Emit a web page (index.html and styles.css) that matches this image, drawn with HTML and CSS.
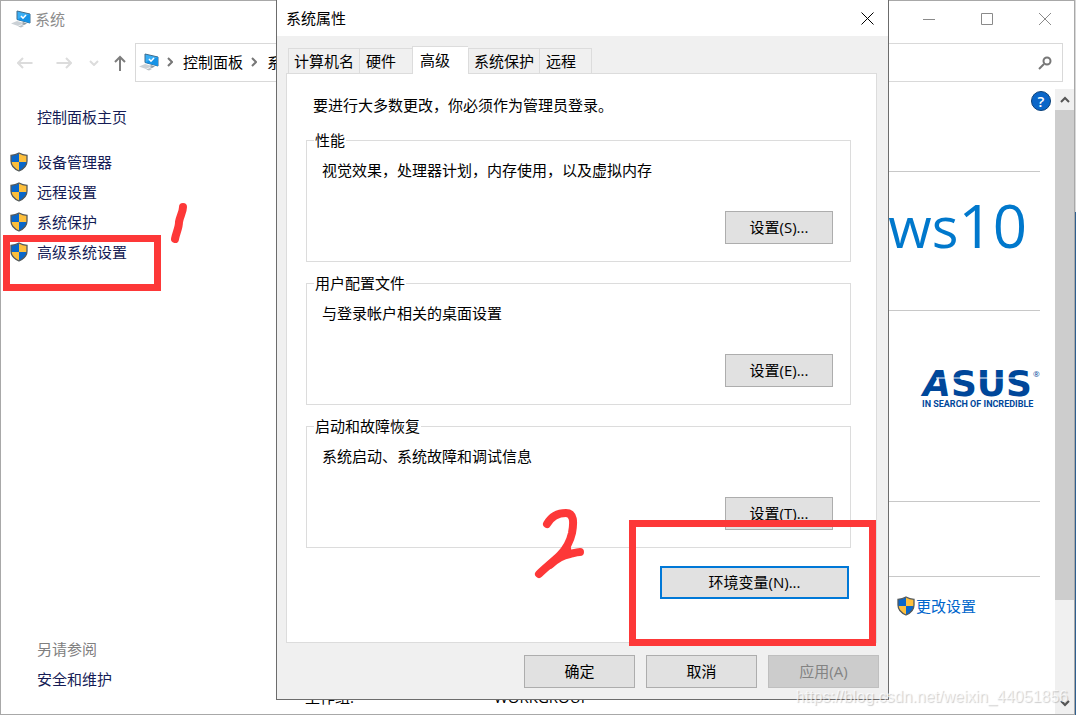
FILE: index.html
```
<!DOCTYPE html>
<html lang="zh-CN">
<head>
    <meta charset="UTF-8">
    <meta name="viewport" content="width=device-width, initial-scale=1.0">
    <title>系统属性</title>
    <link rel="stylesheet" href="styles.css">
</head>
<body>
    <!-- Общие иконки -->
    <svg class="sprite" aria-hidden="true">
        <symbol id="shield" viewBox="0 0 18 20">
            <path d="M9 1C6.500 2.500 4 3.200 1 3.300V9c0 5 3.500 8 8 10z" fill="#0a66c8"/>
            <path d="M9 1c2.500 1.500 5 2.200 8 2.300V9c0 5-3.500 8-8 10z" fill="#fdbf3c"/>
            <path d="M1 10h8v9C4.500 17 1.300 14.500 1 10z" fill="#fdbf3c"/>
            <path d="M17 10H9v9c4.500-2 7.700-4.500 8-9z" fill="#0a66c8"/>
            <path d="M9 1C6.500 2.500 4 3.200 1 3.300V9c0 5 3.500 8 8 10 4.500-2 8-5 8-10V3.300C14 3.200 11.500 2.500 9 1z" fill="none" stroke="#555a5c" stroke-width="1.300"/>
        </symbol>
        <symbol id="computer" viewBox="0 0 20 18">
            <path d="M6 1l13 3v9L6 9.500z" fill="#39aef5" stroke="#3e6d8d"/>
            <path d="M19 4v9L6 9.500z" fill="#1793e6"/>
            <path d="M10 6l2 2.200L15 5" fill="none" stroke="#fff" stroke-width="1.500"/>
            <path d="M12 12l4 1.500-3 1.500-3-1z" fill="#8d9aa3"/>
            <path d="M0 13.500L6 11l7 2-6 3z" fill="#cbd1d6"/>
            <path d="M7 16.500l4-1.500 2 1-3 1.500z" fill="#b9c0c6"/>
        </symbol>
    </svg>

    <div class="window">
        <header class="titlebar">
            <svg class="computer"><use href="#computer"/></svg>
            <span class="title">系统</span>
            <button class="caption" aria-label="最小化">
                <svg width="12" height="12"><path d="M0 6.500h12"/></svg>
            </button>
            <button class="caption" aria-label="最大化">
                <svg width="12" height="12"><path d="M.5.5h11v11H.5z"/></svg>
            </button>
            <button class="caption" aria-label="关闭">
                <svg width="12" height="12"><path d="M0 0l12 12M12 0L0 12"/></svg>
            </button>
        </header>

        <nav class="navbar">
            <button class="nav-btn back" aria-label="后退">
                <svg width="16" height="12"><path d="M15.500 6H1.500M6 1L1 6l5 5"/></svg>
            </button>
            <button class="nav-btn forward" aria-label="前进">
                <svg width="16" height="12"><path d="M.5 6h14M10 1l5 5-5 5"/></svg>
            </button>
            <button class="nav-btn recent" aria-label="最近">
                <svg width="10" height="6"><path d="M1 1l4 4 4-4"/></svg>
            </button>
            <button class="nav-btn up" aria-label="上移">
                <svg width="12" height="16"><path d="M6 16V2M1 7l5-5 5 5"/></svg>
            </button>
            <div class="address">
                <svg class="computer"><use href="#computer"/></svg>
                <svg class="crumb" width="6" height="10"><path d="M1 1l4 4-4 4"/></svg>
                <a href="#">控制面板</a>
                <svg class="crumb" width="6" height="10"><path d="M1 1l4 4-4 4"/></svg>
                <a href="#">系统</a>
            </div>
            <form class="search">
                <input type="search" aria-label="搜索控制面板">
                <button class="search-btn" type="button" aria-label="搜索">
                    <svg width="14" height="14"><circle cx="9" cy="5" r="3.500"/><path d="M6 8l-5 5"/></svg>
                </button>
            </form>
        </nav>

        <div class="content">
            <aside class="sidebar">
                <a class="home" href="#">控制面板主页</a>
                <ul class="tasks">
                    <li><svg class="shield"><use href="#shield"/></svg><a href="#">设备管理器</a></li>
                    <li><svg class="shield"><use href="#shield"/></svg><a href="#">远程设置</a></li>
                    <li><svg class="shield"><use href="#shield"/></svg><a href="#">系统保护</a></li>
                    <li><svg class="shield"><use href="#shield"/></svg><a href="#">高级系统设置</a></li>
                </ul>
                <div class="see-also">
                    <p>另请参阅</p>
                    <a href="#">安全和维护</a>
                </div>
            </aside>

            <main class="info">
                <div class="row help-row">
                    <button class="help" aria-label="帮助">?</button>
                </div>
                <div class="row edition">
                    <div class="windows-logo"><span>Windows</span><span class="version">10</span></div>
                </div>
                <div class="row vendor">
                    <svg class="asus" width="118" height="42" role="img" aria-label="ASUS">
                        <text class="asus-name" x="1" y="27"><tspan font-style="italic">A</tspan>SUS</text>
                        <path d="M14 9h98" stroke="#fff" stroke-width="1"/>
                        <text class="asus-reg" x="111" y="8">®</text>
                        <text class="asus-tag" x="0" y="38">IN SEARCH OF INCREDIBLE</text>
                    </svg>
                </div>
                <div class="row spacer"></div>
                <div class="row change">
                    <svg class="shield"><use href="#shield"/></svg><a href="#">更改设置</a>
                </div>
                <dl class="workgroup">
                    <dt>工作组:</dt>
                    <dd>WORKGROUP</dd>
                </dl>
            </main>

            <div class="scrollbar">
                <button aria-label="向上滚动"><svg width="10" height="7"><path d="M1 6l4-4 4 4"/></svg></button>
                <div class="track"><div class="thumb"></div></div>
                <button aria-label="向下滚动"><svg width="10" height="7"><path d="M1 1l4 4 4-4"/></svg></button>
            </div>
        </div>
    </div>

    <section class="dialog" role="dialog" aria-label="系统属性">
        <header class="dialog-title">
            <h1>系统属性</h1>
            <button class="dialog-close" aria-label="关闭">
                <svg width="13" height="13"><path d="M.5.5l12 12M12.500.5l-12 12"/></svg>
            </button>
        </header>
        <div class="dialog-body">
            <div class="tabs" role="tablist">
                <button class="tab wide" role="tab">计算机名</button>
                <button class="tab" role="tab">硬件</button>
                <button class="tab active" role="tab" aria-selected="true">高级</button>
                <button class="tab wide" role="tab">系统保护</button>
                <button class="tab" role="tab">远程</button>
            </div>
            <div class="panel">
                <p class="note">要进行大多数更改，你必须作为管理员登录。</p>
                <fieldset>
                    <legend>性能</legend>
                    <p>视觉效果，处理器计划，内存使用，以及虚拟内存</p>
                    <button class="btn">设置(S)...</button>
                </fieldset>
                <fieldset>
                    <legend>用户配置文件</legend>
                    <p>与登录帐户相关的桌面设置</p>
                    <button class="btn">设置(E)...</button>
                </fieldset>
                <fieldset>
                    <legend>启动和故障恢复</legend>
                    <p>系统启动、系统故障和调试信息</p>
                    <button class="btn">设置(T)...</button>
                </fieldset>
                <button class="btn env">环境变量(N)...</button>
            </div>
        </div>
        <footer class="actions">
            <button class="btn">确定</button>
            <button class="btn">取消</button>
            <button class="btn" disabled>应用(A)</button>
        </footer>
    </section>

    <!-- Красные пометки поверх окон -->
    <div class="mark mark-task"></div>
    <div class="mark mark-env"></div>
    <svg class="stroke stroke-one" width="20" height="44" role="img" aria-label="1">
        <path d="M13 6c0 5-3 9-4 15 0 6-3 11-4 17" stroke-width="8"/>
    </svg>
    <svg class="stroke stroke-two" width="54" height="74" role="img" aria-label="2">
        <path d="M15 19C19 12 26 8 34 8c8 0 8 9 6 20-2 9-6 16-12 22C22 56 13 63 7 69" stroke-width="8"/>
        <path d="M18 60c6-6 14-10 20-11 4-1 7-2 10-2M20 58c6-4 10-8 15-14" stroke-width="8"/>
    </svg>
    <div class="watermark">https://blog.csdn.net/weixin_44051856</div>
</body>
</html>
```
FILE: styles.css
```
* { box-sizing: border-box; }
body { margin: 0; position: relative; height: 100vh; overflow: hidden; background: linear-gradient(#d8d8d8 212px, #2f5f8f 212px); font: 15px/20px "Open Sans", "Noto Sans CJK SC", sans-serif; color: #000; }
button { font: inherit; color: inherit; padding: 0; border: none; background: none; }
svg { display: block; flex: none; fill: none; }
a { text-decoration: none; color: #151c55; }
p, h1, ul, dl, dd { margin: 0; padding: 0; }
.sprite { position: absolute; width: 0; height: 0; }
.computer { width: 20px; height: 18px; }
.shield { width: 18px; height: 20px; }

/* окно "Система" */
.window { display: flex; flex-direction: column; height: 100vh; margin-right: 1px; background: #fff; border: 1px solid #a8a8a8; }
.titlebar { display: flex; align-items: center; height: 36px; margin-bottom: 6px; padding-left: 10px; }
.title { flex: 1; margin-left: 4px; color: #8c8c8c; }
.caption { width: 58px; height: 36px; display: grid; place-items: center; }
.caption svg { stroke: #8a8a8a; }

.navbar { display: flex; align-items: center; height: 39px; padding: 0 11px 0 6px; }
.nav-btn { display: grid; place-items: center; height: 36px; }
.nav-btn svg { stroke: #dcdcdc; stroke-width: 2; }
.back { width: 36px; }
.forward { width: 41px; }
.recent { width: 20px; }
.up { width: 31px; }
.nav-btn.up svg { stroke: #7d7d7d; }
.address { display: flex; align-items: center; flex: 1; height: 39px; padding: 0 0 2px 3px; border: 1px solid #d9d9d9; }
.address a { color: #000; white-space: nowrap; }
.crumb { margin: 0 10px 0 8px; stroke: #777; stroke-width: 2; }
.search { display: flex; align-items: center; width: 260px; height: 39px; margin-left: 12px; padding-right: 10px; border: 1px solid #d9d9d9; }
.search input { flex: 1; min-width: 0; border: none; outline: none; font: inherit; }
.search-btn svg { stroke: #777; stroke-width: 2; }

.content { display: flex; flex: 1; min-height: 0; }
.sidebar { display: flex; flex-direction: column; width: 276px; padding: 25px 0 20px 9px; }
.home { margin-left: 27px; }
.tasks { margin-top: 20px; list-style: none; }
.tasks li { display: flex; align-items: center; gap: 9px; height: 30px; }
.see-also { margin: auto 0 0 27px; line-height: 30px; }
.see-also p { color: #808080; }

.info { flex: 1; padding: 0 15px 0 28px; overflow: hidden; }
.row { display: flex; justify-content: flex-end; border-bottom: 1px solid #c8c8c8; }
.help-row { height: 90px; padding-top: 9px; }
.help { width: 20px; height: 20px; margin-right: -11px; border: 1px solid #0a4078; border-radius: 50%; background: #0a66c8; color: #fff; font-weight: 600; line-height: 18px; }
.edition { height: 139px; align-items: center; padding: 0 13px 32px 0; }
.windows-logo { display: flex; align-items: baseline; font-size: 56px; line-height: 80px; color: #0078cc; }
.version { font-size: 60px; }
.vendor { height: 191px; align-items: center; padding-bottom: 33px; }
.asus { overflow: visible; }
.asus text { fill: #00479a; }
.asus .asus-name { font: bold 36px "DejaVu Sans", sans-serif; }
.asus .asus-tag { font: bold 9px Roboto, sans-serif; }
.asus .asus-reg { font-size: 8px; }
.spacer { height: 75px; }
.change { justify-content: flex-start; align-items: center; height: 110px; padding: 0 0 52px 592px; border: none; }
.change a { margin-left: 1px; color: #0066cc; white-space: nowrap; }
.workgroup { display: flex; }
.workgroup dt { width: 189px; }

.scrollbar { display: flex; flex-direction: column; width: 19px; margin-top: 7px; background: #f0f0f0; }
.scrollbar button { display: grid; place-items: center; height: 21px; }
.scrollbar button svg { stroke: #555; stroke-width: 2; }
.track { flex: 1; }
.thumb { height: 84%; background: #cdcdcd; }

/* диалог свойств */
.dialog { position: absolute; top: 0; left: 276px; width: 613px; border: 1px solid #6c6c6c; border-top: none; background: #f0f0f0; }
.dialog-title { display: flex; align-items: center; justify-content: space-between; height: 36px; padding-left: 9px; background: #fff; }
.dialog-title h1 { font-size: 15px; font-weight: normal; }
.dialog-close { display: grid; place-items: center; width: 42px; height: 36px; }
.dialog-close svg { stroke: #000; }
.dialog-body { padding: 10px 11px 0 9px; }
.tabs { display: flex; align-items: flex-end; height: 27px; padding-left: 2px; }
.tab { width: 53px; height: 25px; padding-left: 6px; border: 1px solid #dcdcdc; border-width: 1px 0 0 1px; text-align: left; white-space: nowrap; }
.tab.wide { width: 71px; padding-left: 5px; }
.tab:last-child { border-right-width: 1px; }
.tab.active { position: relative; width: 56px; height: 28px; margin-bottom: -1px; padding: 0 0 2px 7px; background: #fff; }
.panel { padding: 21px 25px 43px 19px; border: 1px solid #dcdcdc; background: #fff; }
.note { margin: 0 0 15px 7px; }
fieldset { min-width: 0; margin: 0 0 11px; padding: 10px 17px 17px 15px; border: 1px solid #dcdcdc; }
legend { margin-left: -8px; padding: 0 1px; }
.btn { display: block; width: 108px; height: 33px; padding-bottom: 2px; border: 1px solid #adadad; background: #e1e1e1; text-align: center; white-space: nowrap; }
fieldset .btn { margin: 31px 0 0 auto; }
.env { width: 189px; margin: 18px 2px 0 auto; border: 2px solid #0078d7; }
.actions { display: flex; justify-content: flex-end; gap: 11px; padding: 12px 9px 11px; }
.actions .btn { width: 111px; }
.btn:disabled { border-color: #bfbfbf; background: #ccc; color: #838383; }

/* пометки */
.mark { position: absolute; border: 7px solid #fd3838; }
.mark-task { left: 3px; top: 235px; width: 158px; height: 56px; }
.mark-env { left: 629px; top: 520px; width: 247px; height: 126px; }
.stroke { position: absolute; stroke: #fd3838; stroke-linecap: round; stroke-linejoin: round; }
.stroke-one { left: 170px; top: 201px; }
.stroke-two { left: 532px; top: 505px; }
.watermark { position: absolute; right: 8px; bottom: 8px; font: 16px/20px "Liberation Sans", Arial, sans-serif; color: rgba(255, 255, 255, 0.7); text-shadow: 1px 1px 1px rgba(0, 0, 0, 0.2); }
```
